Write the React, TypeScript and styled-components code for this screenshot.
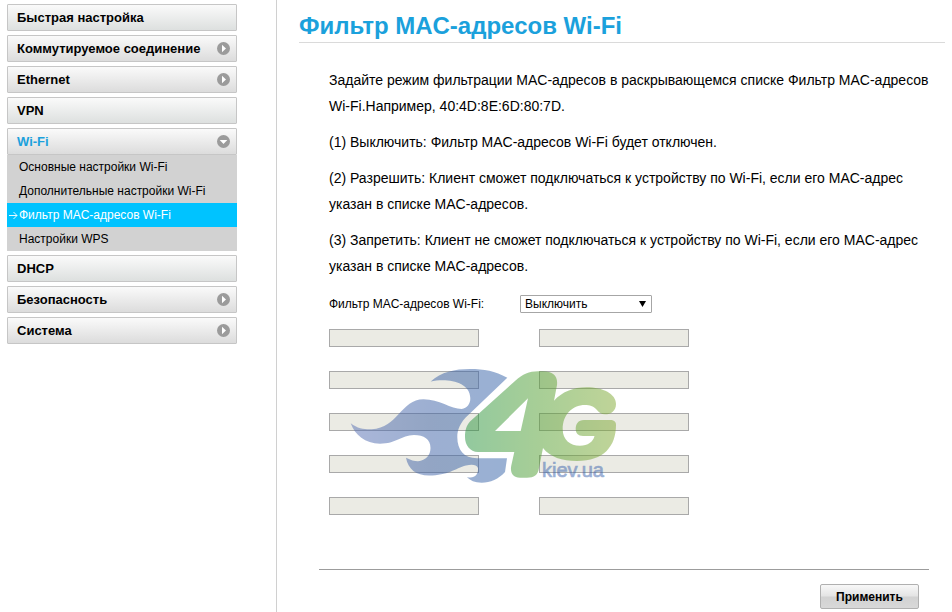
import React from "react";
import styled, { createGlobalStyle, css } from "styled-components";

const GlobalStyle = createGlobalStyle`
  *, *::before, *::after { box-sizing: border-box; }
  body {
    margin: 0;
    background: #fff;
    color: #000;
    font-family: "Liberation Sans", Arial, Helvetica, sans-serif;
    font-size: 12px;
  }
`;

const Page = styled.div`
  display: grid;
  grid-template-columns: 277px minmax(0, 1fr);
  min-height: 100vh;
`;

const Sidebar = styled.nav`
  padding: 4px 39px 4px 7px;
  border-right: 1px solid #d0d0d0;
`;

const Menu = styled.ul`
  display: flex;
  flex-direction: column;
  gap: 4px;
  margin: 0;
  padding: 0;
  list-style: none;
`;

const MenuLink = styled.a<{ $active?: boolean; $plain?: boolean }>`
  display: flex;
  align-items: center;
  justify-content: space-between;
  height: 27px;
  padding: 0 6px 0 9px;
  border: 1px solid #c6c6c6;
  border-radius: 1px;
  background: linear-gradient(#fafafa, ${(p) => (p.$plain ? "#dde0df" : "#dcdcdc")});
  color: ${(p) => (p.$active ? "#1ba1dc" : "#000")};
  font-size: 13px;
  font-weight: bold;
  text-decoration: none;
`;

const Submenu = styled.ul`
  margin: 0;
  padding: 0;
  list-style: none;
  background: #d2d2d2;
`;

const SubmenuLink = styled.a<{ $active?: boolean }>`
  display: flex;
  align-items: center;
  height: 24px;
  padding-left: 12px;
  color: #000;
  font-size: 12px;
  text-decoration: none;
  ${(p) =>
    p.$active &&
    css`
      padding-left: 2px;
      background: #00c3ff;
      color: #fff;
    `}
`;

const Content = styled.main`
  padding: 4px 7px 3px 22px;
`;

const Title = styled.h1`
  margin: 0;
  padding-top: 6px;
  height: 39px;
  border-bottom: 1px solid #dadada;
  color: #1ba1dc;
  font-size: 24px;
  line-height: 32px;
`;

const Body = styled.form`
  margin: 24px 16px 0 20px;
`;

const Section = styled.div`
  padding-left: 10px;
`;

const Paragraph = styled.p`
  margin: 0 -8px 10px 0;
  font-size: 14px;
  line-height: 26px;
`;

const ModeRow = styled.div`
  display: flex;
  align-items: center;
  margin-top: 16px;
`;

const ModeLabel = styled.label`
  width: 191px;
`;

const SelectBox = styled.div`
  position: relative;
  width: 132px;
`;

const Select = styled.select`
  display: block;
  appearance: none;
  width: 100%;
  height: 18px;
  padding: 0 20px 0 4px;
  border: 1px solid #a6a6a6;
  border-radius: 1px;
  background: #fff;
  color: #000;
  font: inherit;
  line-height: 16px;
`;

const SelectArrow = styled.svg`
  position: absolute;
  top: 6px;
  right: 6px;
  pointer-events: none;
`;

const Addresses = styled.div`
  position: relative;
  display: grid;
  grid-template-columns: 150px 150px;
  gap: 24px 60px;
  margin-top: 16px;
`;

const AddressInput = styled.input`
  width: 100%;
  height: 18px;
  padding: 0 2px;
  border: 1px solid #a9a9a9;
  background: #ebebe4;
  font: inherit;
`;

const Watermark = styled.svg`
  position: absolute;
  top: 36px;
  left: 16px;
  opacity: 0.5;
  pointer-events: none;
`;

const Actions = styled.div`
  display: flex;
  justify-content: flex-end;
  margin-top: 54px;
  padding: 14px 10px 0 0;
  border-top: 1px solid #9c9c9c;
`;

const ApplyButton = styled.button`
  width: 99px;
  height: 25px;
  padding: 0;
  border: 1px solid #b0b0b0;
  border-radius: 2px;
  background: linear-gradient(#f8f8f8, #e4e4e4 48%, #d2d2d2 52%, #d8d8d8);
  color: #000;
  font-family: inherit;
  font-size: 12px;
  font-weight: bold;
`;

function Chevron({ open }: { open?: boolean }) {
  return (
    <svg width="13" height="13" viewBox="0 0 13 13" aria-hidden="true">
      <circle cx="6.5" cy="6.5" r="6.5" fill="#9b9b9b" />
      <path d={open ? "M2.7 5h7.6L6.5 9z" : "M5 2.7v7.6L9 6.5z"} fill="#fff" />
    </svg>
  );
}

function CurrentArrow() {
  return (
    <svg width="10" height="9" viewBox="0 0 10 9" fill="none" stroke="#fff" aria-hidden="true">
      <path d="M0 4.5h8M4.5 1l3.5 3.5L4.5 8" strokeWidth="0.9" />
    </svg>
  );
}

function Logo() {
  return (
    <Watermark width="276" height="120" viewBox="345 365 276 120" aria-hidden="true">
      <defs>
        <linearGradient id="flame" x1="0" x2="1">
          <stop offset="0" stopColor="#5870b4" />
          <stop offset="0.5" stopColor="#3d62a6" />
          <stop offset="1" stopColor="#3564a9" />
        </linearGradient>
        <linearGradient id="leaf" x1="0" x2="1">
          <stop offset="0" stopColor="#289440" />
          <stop offset="0.5" stopColor="#539f30" />
          <stop offset="1" stopColor="#82aa34" />
        </linearGradient>
      </defs>
      <path
        fill="url(#flame)"
        d="M350.7 423.3C358 429 365 429.5 371.7 429.3C398 428 401 399.3 423.5 399.3C439 399.3 451 409 461.7 409C467 408 470.5 404 470.3 398C470 381 446 378 430.7 381.5C441 372 455 369 470 369C484 369 495 371 507.3 377.7L468.3 415C460 422.5 457.3 430 457.3 437C457.3 450 464 458.2 477 458.2H507L505 472C499 479 490 482.7 481.7 482.7C475 482.7 470 480.5 467 477C474 479 478.5 475 478 468C476.5 464.5 472 464 466 465.5C455 468.5 448 475.5 429 475.5C416 475.5 408 469 406 457.7C411 460 414 461.3 418 461.3C426 460.5 430.5 455 430.5 448C430.5 439 424 435 414 435C401 435.5 396 443.7 380 443.7C365 443.7 355 435 350.7 423.3Z"
      />
      <path
        fill="url(#leaf)"
        fillRule="evenodd"
        d="M465 437C465 431 466 426 470 421.5L515 381C523 374 529 371.3 538 371.3H543C553 371.3 558 376 557 385L554 400.7C562 392 573 387.3 586.7 387.3C603 387.3 616 394 616 404C616 411 611 414.3 605 414.3C601 414.3 599 412.5 596.5 409.5C593 406 590 405 585 405C572 405 562.7 415 562.7 429C562.7 440 570 445.7 580 445.7C588 445.7 593 442 594.5 436H583C578 436 575.7 433 575.7 429C575.7 424 578 420 584 420H610C614 420 616 421.5 616 425C616 446 604 461 577 461C562 461 550 457 543 448L539 468C538 475 534 477.7 527 477.7H520C513 477.7 510 473 511.2 466L514.3 452H478C470 452 465 445 465 437ZM495 431L528 398.3L520.7 431Z"
      />
      <text
        x="542"
        y="477"
        fill="#3a63ad"
        stroke="#3a63ad"
        strokeWidth="0.7"
        fontFamily="Liberation Sans, Arial, sans-serif"
        fontSize="20"
      >
        kiev.ua
      </text>
    </Watermark>
  );
}

interface MenuEntry {
  label: string;
  expandable?: boolean;
  children?: string[];
}

const menu: MenuEntry[] = [
  { label: "Быстрая настройка" },
  { label: "Коммутируемое соединение", expandable: true },
  { label: "Ethernet", expandable: true },
  { label: "VPN" },
  {
    label: "Wi-Fi",
    expandable: true,
    children: [
      "Основные настройки Wi-Fi",
      "Дополнительные настройки Wi-Fi",
      "Фильтр MAC-адресов Wi-Fi",
      "Настройки WPS",
    ],
  },
  { label: "DHCP" },
  { label: "Безопасность", expandable: true },
  { label: "Система", expandable: true },
];

const currentPage = "Фильтр MAC-адресов Wi-Fi";

const help = [
  "Задайте режим фильтрации MAC-адресов в раскрывающемся списке Фильтр MAC-адресов Wi-Fi.Например, 40:4D:8E:6D:80:7D.",
  "(1) Выключить: Фильтр MAC-адресов Wi-Fi будет отключен.",
  "(2) Разрешить: Клиент сможет подключаться к устройству по Wi-Fi, если его MAC-адрес указан в списке MAC-адресов.",
  "(3) Запретить: Клиент не сможет подключаться к устройству по Wi-Fi, если его MAC-адрес указан в списке MAC-адресов.",
];

export default function App() {
  return (
    <Page>
      <GlobalStyle />
      <Sidebar>
        <Menu>
          {menu.map((entry) => (
            <li key={entry.label}>
              <MenuLink href="#" $active={!!entry.children} $plain={!entry.expandable}>
                {entry.label}
                {entry.expandable && <Chevron open={!!entry.children} />}
              </MenuLink>
              {entry.children && (
                <Submenu>
                  {entry.children.map((child) => (
                    <li key={child}>
                      <SubmenuLink href="#" $active={child === currentPage}>
                        {child === currentPage && <CurrentArrow />}
                        {child}
                      </SubmenuLink>
                    </li>
                  ))}
                </Submenu>
              )}
            </li>
          ))}
        </Menu>
      </Sidebar>
      <Content>
        <Title>{currentPage}</Title>
        <Body onSubmit={(e) => e.preventDefault()}>
          <Section>
            {help.map((text) => (
              <Paragraph key={text}>{text}</Paragraph>
            ))}
            <ModeRow>
              <ModeLabel htmlFor="mode">Фильтр MAC-адресов Wi-Fi:</ModeLabel>
              <SelectBox>
                <Select id="mode" defaultValue="off">
                  <option value="off">Выключить</option>
                  <option value="allow">Разрешить</option>
                  <option value="deny">Запретить</option>
                </Select>
                <SelectArrow width="7" height="6" viewBox="0 0 7 6" aria-hidden="true">
                  <path d="M0 0h7L3.5 6z" />
                </SelectArrow>
              </SelectBox>
            </ModeRow>
            <Addresses>
              {Array.from({ length: 10 }, (_, i) => (
                <AddressInput key={i} type="text" disabled aria-label={`MAC-адрес ${i + 1}`} />
              ))}
              <Logo />
            </Addresses>
          </Section>
          <Actions>
            <ApplyButton type="submit">Применить</ApplyButton>
          </Actions>
        </Body>
      </Content>
    </Page>
  );
}
